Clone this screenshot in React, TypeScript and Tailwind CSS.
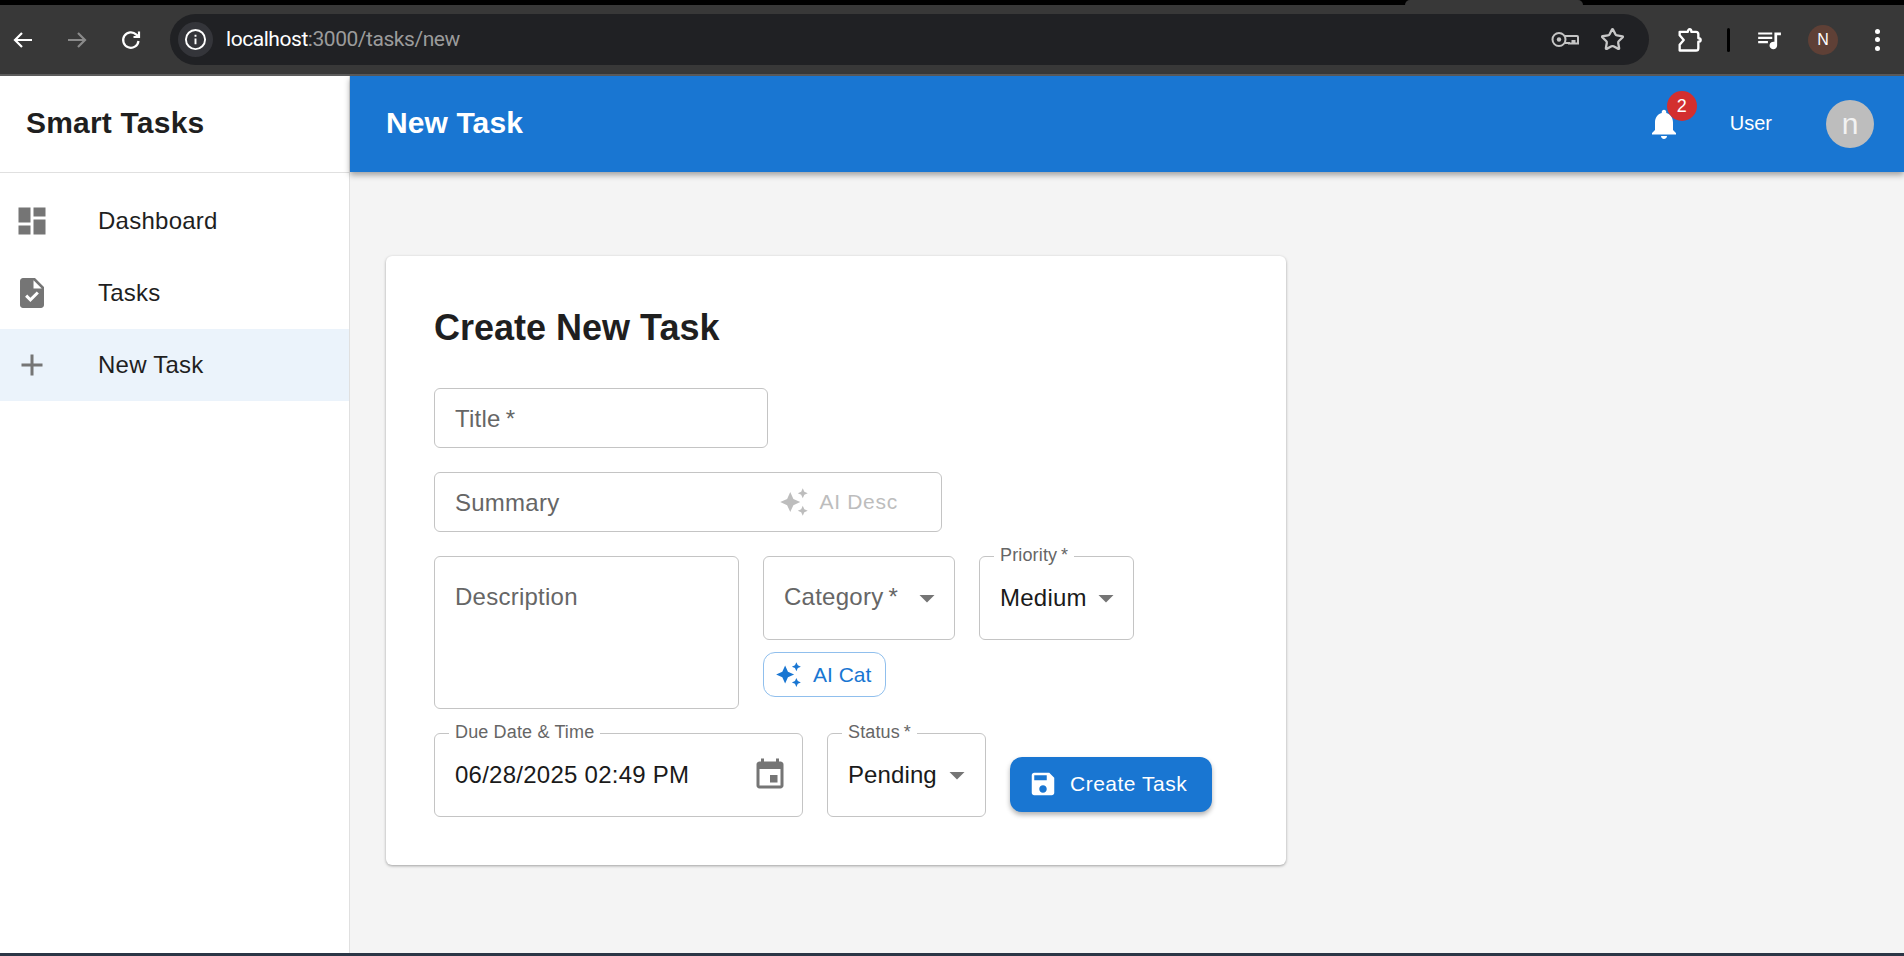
import { Star } from 'lucide-react';

const font = 'font-["Liberation_Sans",Arial,sans-serif]';

function MuiIcon({ d, className }: { d: string; className: string }) {
  return (
    <svg viewBox="0 0 24 24" fill="currentColor" className={className}>
      <path d={d} />
    </svg>
  );
}

const ICONS = {
  dashboard: 'M3 13h8V3H3v10zm0 8h8v-6H3v6zm10 0h8V11h-8v10zm0-18v6h8V3h-8z',
  task: 'M14 2H6c-1.1 0-1.99.9-1.99 2L4 20c0 1.1.89 2 1.99 2H18c1.1 0 2-.9 2-2V8l-6-6zm-3.06 16L7.4 14.46l1.41-1.41 2.12 2.12 4.24-4.24 1.41 1.41L10.94 18zM13 9V3.5L18.5 9H13z',
  add: 'M19 13h-6v6h-2v-6H5v-2h6V5h2v6h6v2z',
  bell: 'M12 22c1.1 0 2-.9 2-2h-4c0 1.1.89 2 2 2zm6-6v-5c0-3.07-1.64-5.64-4.5-6.32V4c0-.83-.67-1.5-1.5-1.5s-1.5.67-1.5 1.5v.68C7.63 5.36 6 7.92 6 11v5l-2 2v1h16v-1l-2-2z',
  sparkle: 'M19 9l1.25-2.75L23 5l-2.75-1.25L19 1l-1.25 2.75L15 5l2.75 1.25L19 9zm-7.5.5L9 4 6.5 9.5 1 12l5.5 2.5L9 20l2.5-5.5L17 12l-5.5-2.5zM19 15l-1.25 2.75L15 19l2.75 1.25L19 23l1.25-2.75L23 19l-2.75-1.25L19 15z',
  event: 'M17 12h-5v5h5v-5zM16 1v2H8V1H6v2H5c-1.11 0-1.99.9-1.99 2L3 19c0 1.1.89 2 2 2h14c1.1 0 2-.9 2-2V5c0-1.1-.9-2-2-2h-1V1h-2zm3 18H5V8h14v11z',
  save: 'M17 3H5c-1.11 0-2 .9-2 2v14c0 1.1.89 2 2 2h14c1.1 0 2-.9 2-2V7l-4-4zm-5 16c-1.66 0-3-1.34-3-3s1.34-3 3-3 3 1.34 3 3-1.34 3-3 3zm3-10H5V5h10v4z',
  arrowDrop: 'M7 10l5 5 5-5z',
};

function BrowserBar() {
  return (
    <div className="h-[76px] shrink-0 bg-black">
      <div className="flex h-[5px]">
        <div className="w-[1405px]" />
        <div className="w-[178px] rounded-t-[5px] bg-[#383838]" />
      </div>
      <div className="flex h-[71px] items-center border-b-2 border-[#5c5c5c] bg-[#383838]">
        <svg viewBox="0 0 24 24" className="ml-[11px] h-[24px] w-[24px] text-white" fill="none" stroke="currentColor" strokeWidth="2.2">
          <path d="M21 12H4M11 5l-7 7 7 7" />
        </svg>
        <svg viewBox="0 0 24 24" className="ml-[30px] h-[24px] w-[24px] text-[#8a8a8a]" fill="none" stroke="currentColor" strokeWidth="2.2">
          <path d="M3 12h17M13 5l7 7-7 7" />
        </svg>
        <svg viewBox="0 0 24 24" className="ml-[30px] h-[24px] w-[24px] text-white" fill="none" stroke="currentColor" strokeWidth="2.2">
          <path d="M19.5 13a7.7 7.7 0 1 1-2.2-6.4L20 9M20 3.5V9h-5.5" />
        </svg>
        <div className="ml-[27px] flex h-[51px] w-[1479px] items-center rounded-full bg-[#202124]">
          <div className="ml-[8px] flex h-[35px] w-[35px] items-center justify-center rounded-full bg-[#34353a]">
            <svg viewBox="0 0 24 24" className="h-[23px] w-[23px] text-white" fill="none" stroke="currentColor" strokeWidth="2">
              <circle cx="12" cy="12" r="10" />
              <path d="M12 11v6M12 7v2" />
            </svg>
          </div>
          <span className={`ml-[13px] text-[21px] tracking-[-0.45px] text-white font-["Roboto",sans-serif]`}>
            localhost<span className="text-[#9b9b9b]">:3000/tasks/new</span>
          </span>
          <svg viewBox="0 0 28 16" className="ml-auto h-[17px] w-[28px] text-[#c4c4c4]" fill="none" stroke="currentColor" strokeWidth="2">
            <circle cx="8" cy="8" r="6.500" />
            <circle cx="8" cy="8" r="2.200" fill="currentColor" stroke="none" />
            <path d="M14 4.500h12a1 1 0 0 1 1 1v6.500h-3.500V9.500h-2V12H18V11.500h-4" />
          </svg>
          <Star className="ml-[21px] mr-[24px] h-[25px] w-[25px] text-[#c8c8c8]" strokeWidth={2.2} />
        </div>
        <svg viewBox="0 0 24 24" className="ml-[26px] h-[28px] w-[28px] text-white" fill="none" stroke="currentColor" strokeWidth="2" strokeLinejoin="round">
          <path d="M4 5h7c0-1.500.8-2.200 1.600-2.200S14 3.500 14 5h4a2 2 0 0 1 2 2v3.500c1.500 0 2 .8 2 1.500s-.5 1.500-2 1.500V19a2 2 0 0 1-2 2H4v-5l3.500-4L4 8z" />
        </svg>
        <div className="ml-[24px] h-[24px] w-[3px] rounded-sm bg-black" />
        <svg viewBox="0 0 24 24" className="ml-[26px] h-[26px] w-[26px] text-white" fill="currentColor">
          <path d="M2 5h13v2H2zM2 9h13v2H2zM2 13h9v2H2zM17 5h6v2.500h-3.500V17a3.500 3.500 0 1 1-2.500-3.300z" />
        </svg>
        <div className={`ml-[26px] flex h-[30px] w-[30px] items-center justify-center rounded-full bg-[#5f4036] text-[16px] text-white ${font}`}>N</div>
        <div className="ml-[37px] flex flex-col gap-[3.500px]">
          <div className="h-[5px] w-[5px] rounded-full bg-white" />
          <div className="h-[5px] w-[5px] rounded-full bg-white" />
          <div className="h-[5px] w-[5px] rounded-full bg-white" />
        </div>
      </div>
    </div>
  );
}

function NavItem({ icon, label, active }: { icon: string; label: string; active?: boolean }) {
  return (
    <div className={`flex h-[72px] items-center pl-[14px] ${active ? 'bg-[#ebf3fb]' : ''}`}>
      <MuiIcon d={icon} className="h-[36px] w-[36px] text-[#757575]" />
      <span className="ml-[48px] text-[24px] tracking-[0.25px] text-[#1f1f1f]">{label}</span>
    </div>
  );
}

function Sidebar() {
  return (
    <aside className="w-[350px] shrink-0 border-r border-[#e0e0e0] bg-white">
      <div className="flex h-[97px] items-center border-b border-[#e0e0e0] pb-[4px] pl-[26px] text-[30px] font-bold tracking-[0.2px] text-[#1f1f1f]">
        Smart Tasks
      </div>
      <nav className="pt-[12px]">
        <NavItem icon={ICONS.dashboard} label="Dashboard" />
        <NavItem icon={ICONS.task} label="Tasks" />
        <NavItem icon={ICONS.add} label="New Task" active />
      </nav>
    </aside>
  );
}

function TopBar() {
  return (
    <header className="flex h-[96px] shrink-0 items-center bg-[#1976d2] pl-[36px] pr-[30px] text-white shadow-[0_3px_6px_rgba(0,0,0,0.35)]">
      <div className="pb-[4px] text-[30px] font-bold tracking-[0.1px]">New Task</div>
      <div className="relative ml-auto h-[36px] w-[36px]">
        <MuiIcon d={ICONS.bell} className="h-[36px] w-[36px]" />
        <div className="absolute left-[21px] top-[-15px] flex h-[30px] w-[30px] items-center justify-center rounded-full bg-[#d32f2f] text-[18px] font-medium">2</div>
      </div>
      <div className="ml-[48px] pb-[2px] text-[20px]">User</div>
      <div className="ml-[54px] flex h-[48px] w-[48px] items-center justify-center rounded-full bg-[#bdbdbd] pb-[2px] text-[30px] text-[#f2f2f2]">n</div>
    </header>
  );
}

function Box({ label, className, children }: { label?: string; className: string; children?: React.ReactNode }) {
  return (
    <div className={`relative rounded-[6px] border border-[#c4c4c4] ${className}`}>
      {label && (
        <span className="absolute left-[14px] top-[-13px] bg-white px-[6px] text-[18px] leading-[22px] tracking-[0.15px] text-[#666]">{label}</span>
      )}
      {children}
    </div>
  );
}

function Arrow() {
  return <MuiIcon d={ICONS.arrowDrop} className="h-[36px] w-[36px] text-[#757575]" />;
}

function TaskForm() {
  return (
    <div className="w-[900px] rounded-[6px] bg-white p-[48px] shadow-[0_1px_3px_rgba(0,0,0,0.35)]">
      <h1 className="text-[36px] font-bold leading-[48px] text-[#1f1f1f]">Create New Task</h1>

      <div className="mt-[36px] flex flex-col gap-[24px]">
        <Box className="flex h-[60px] w-[334px] items-center pl-[20px] pt-[2px] text-[24px] tracking-[0.25px] text-[#666]">{'Title\u2009*'}</Box>

        <Box className="flex h-[60px] w-[508px] items-center pl-[20px] text-[24px] tracking-[0.25px] text-[#666]">
          <span className="pt-[1px]">Summary</span>
          <div className="ml-[220px] flex items-center text-[#bdbdbd]">
            <MuiIcon d={ICONS.sparkle} className="h-[30px] w-[30px]" />
            <span className="ml-[10px] text-[21px] tracking-[0.7px]">AI Desc</span>
          </div>
        </Box>

        <div className="flex items-start gap-[24px]">
          <Box className="h-[153px] w-[305px] pl-[20px] pt-[24px] text-[24px] leading-[32px] tracking-[0.25px] text-[#666]">Description</Box>
          <div className="flex flex-col items-start gap-[12px]">
            <Box className="flex h-[84px] w-[192px] items-center pl-[20px] pr-[9px] text-[24px] tracking-[0.25px] text-[#666]">
              <span className="pb-[2px]">{'Category\u2009*'}</span>
              <div className="ml-auto"><Arrow /></div>
            </Box>
            <div className="flex h-[45px] w-[123px] items-center rounded-[12px] border border-[#90bfed] pl-[11px] text-[21px] text-[#1976d2]">
              <MuiIcon d={ICONS.sparkle} className="h-[27px] w-[27px]" />
              <span className="ml-[11px]">AI Cat</span>
            </div>
          </div>
          <Box label={'Priority\u2009*'} className="flex h-[84px] w-[155px] items-center pl-[20px] pr-[9px] text-[24px] tracking-[0.25px] text-[#1a1a1a]">
            Medium
            <div className="ml-auto"><Arrow /></div>
          </Box>
        </div>

        <div className="flex items-start gap-[24px]">
          <Box label="Due Date & Time" className="flex h-[84px] w-[369px] items-center pl-[20px] pr-[14px] text-[24px] tracking-[0.25px] text-[#1a1a1a]">
            06/28/2025 02:49 PM
            <div className="ml-auto"><MuiIcon d={ICONS.event} className="h-[36px] w-[36px] text-[#757575]" /></div>
          </Box>
          <Box label={'Status\u2009*'} className="flex h-[84px] w-[159px] items-center pl-[20px] pr-[10px] text-[24px] tracking-[0.1px] text-[#1a1a1a]">
            Pending
            <div className="ml-auto"><Arrow /></div>
          </Box>
          <div className="mt-[24px] flex h-[55px] w-[202px] items-center rounded-[12px] bg-[#1976d2] pb-[2px] pl-[18px] text-[21px] font-medium tracking-[0.5px] text-white shadow-[0_3px_5px_rgba(0,0,0,0.3)]">
            <MuiIcon d={ICONS.save} className="h-[30px] w-[30px]" />
            <span className="ml-[12px]">Create Task</span>
          </div>
        </div>
      </div>
    </div>
  );
}

export default function App() {
  return (
    <div className={`flex h-[956px] w-[1904px] flex-col overflow-hidden bg-[#f4f4f4] ${font}`}>
      <BrowserBar />
      <div className="flex min-h-0 flex-1">
        <Sidebar />
        <div className="flex min-w-0 flex-1 flex-col">
          <TopBar />
          <main className="pl-[36px] pt-[84px]">
            <TaskForm />
          </main>
        </div>
      </div>
      <div className="h-[3px] shrink-0 bg-[#2b3646]" />
    </div>
  );
}
